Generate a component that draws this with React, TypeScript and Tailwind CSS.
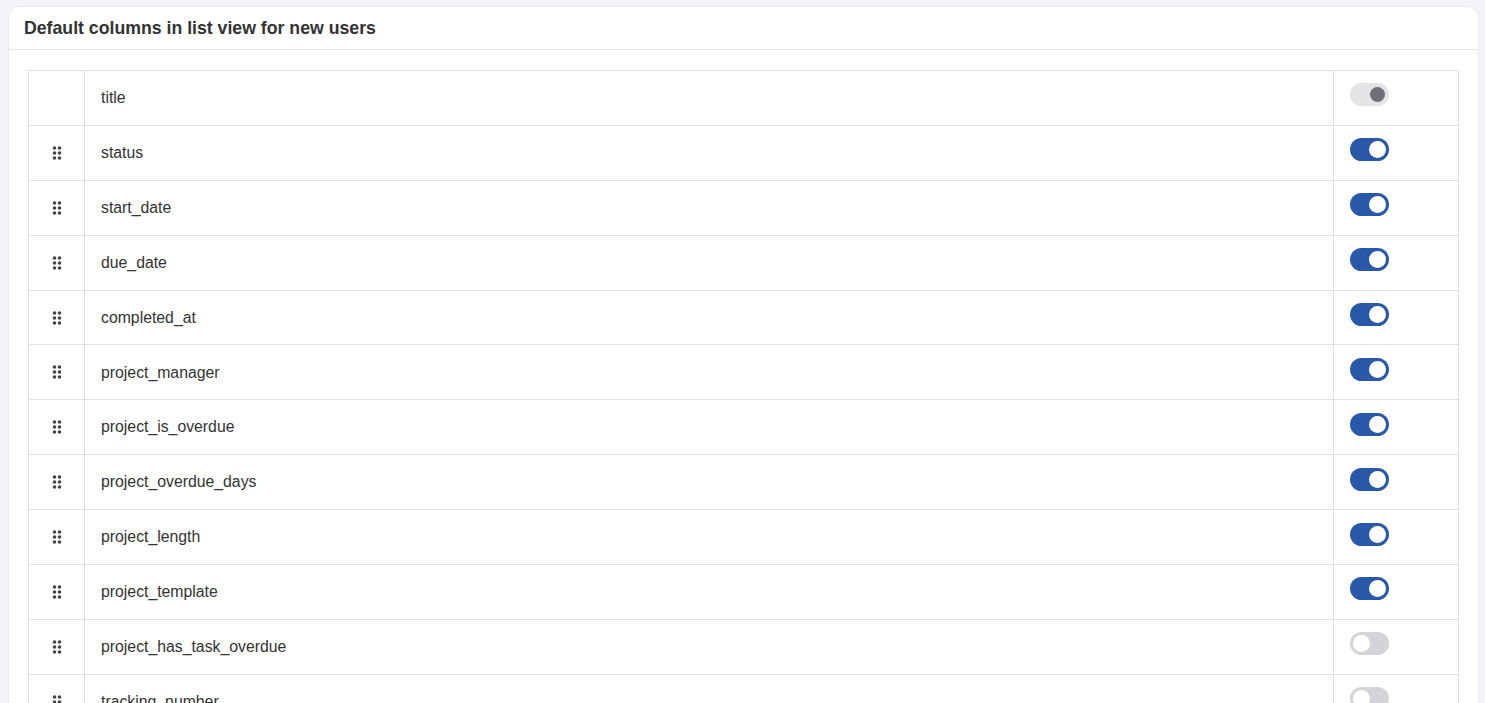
import React from "react";

type Row = { name: string; state: "locked" | "on" | "off" };

const rows: Row[] = [
  { name: "title", state: "locked" },
  { name: "status", state: "on" },
  { name: "start_date", state: "on" },
  { name: "due_date", state: "on" },
  { name: "completed_at", state: "on" },
  { name: "project_manager", state: "on" },
  { name: "project_is_overdue", state: "on" },
  { name: "project_overdue_days", state: "on" },
  { name: "project_length", state: "on" },
  { name: "project_template", state: "on" },
  { name: "project_has_task_overdue", state: "off" },
  { name: "tracking_number", state: "off" },
];

function Grip() {
  return (
    <svg width="10" height="16" viewBox="0 0 10 16" className="block">
      {[2.5, 7.5].map((x) =>
        [3, 8, 13].map((y) => <circle key={`${x}-${y}`} cx={x} cy={y} r="1.8" fill="#444" />)
      )}
    </svg>
  );
}

function Toggle({ state }: { state: Row["state"] }) {
  if (state === "locked") {
    return (
      <div className="w-[39px] h-[23px] rounded-full bg-[#e4e4e7] flex items-center justify-end pr-[4px]">
        <div className="w-[15px] h-[15px] rounded-full bg-[#6f6f78]" />
      </div>
    );
  }
  if (state === "on") {
    return (
      <div className="w-[39px] h-[23px] rounded-full bg-[#2a58a8] flex items-center justify-end pr-[3px]">
        <div className="w-[17px] h-[17px] rounded-full bg-white" />
      </div>
    );
  }
  return (
    <div className="w-[39px] h-[23px] rounded-full bg-[#d4d4d8] flex items-center justify-start pl-[3px]">
      <div className="w-[17px] h-[17px] rounded-full bg-white" />
    </div>
  );
}

export default function App() {
  return (
    <div
      className="w-[1485px] h-[703px] overflow-hidden bg-[#f3f4f8] pt-[6px] pl-[8px] pr-[6px]"
      style={{ fontFamily: '"Liberation Sans", Arial, sans-serif' }}
    >
      <div className="bg-white rounded-t-[12px] border border-[#e8e9ee] h-[720px]">
        <div className="h-[43px] border-b border-[#e5e7eb] flex items-center pl-[15px]">
          <h2 className="text-[17.7px] font-bold text-[#333]">Default columns in list view for new users</h2>
        </div>
        <div className="pt-[20px] pl-[19px] pr-[19px]">
          <div className="border-l border-t border-r border-[#e0e0e0]">
            {rows.map((r) => (
              <div key={r.name} className="flex h-[54.9px] border-b border-[#e0e0e0]">
                <div className="w-[56px] border-r border-[#e0e0e0] flex items-center justify-center">
                  {r.state !== "locked" && <Grip />}
                </div>
                <div className="flex-1 flex items-center pl-[16px] text-[15.8px] text-[#333]">{r.name}</div>
                <div className="w-[125px] border-l border-[#e0e0e0] flex items-center pl-[16px]">
                  <div className="mb-[6px]">
                    <Toggle state={r.state} />
                  </div>
                </div>
              </div>
            ))}
          </div>
        </div>
      </div>
    </div>
  );
}
